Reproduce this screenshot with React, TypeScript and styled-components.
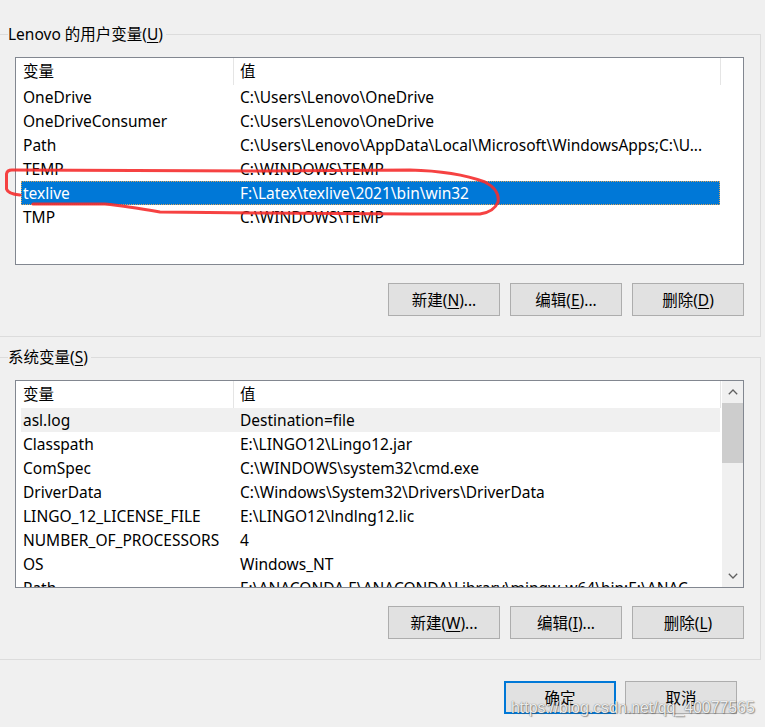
import styled, { createGlobalStyle } from "styled-components";

const GlobalStyle = createGlobalStyle`
  html, body {
    margin: 0;
    padding: 0;
    background: #f0f0f0;
  }
  body {
    font-family: "Noto Sans", "Noto Sans CJK SC", sans-serif;
    font-size: 15.5px;
    color: #000;
  }
`;

interface EnvVar {
  name: string;
  value: string;
  state?: "active" | "inactive";
}

const userVars: EnvVar[] = [
  { name: "OneDrive", value: "C:\\Users\\Lenovo\\OneDrive" },
  { name: "OneDriveConsumer", value: "C:\\Users\\Lenovo\\OneDrive" },
  {
    name: "Path",
    value: "C:\\Users\\Lenovo\\AppData\\Local\\Microsoft\\WindowsApps;C:\\U...",
  },
  { name: "TEMP", value: "C:\\WINDOWS\\TEMP" },
  { name: "texlive", value: "F:\\Latex\\texlive\\2021\\bin\\win32", state: "active" },
  { name: "TMP", value: "C:\\WINDOWS\\TEMP" },
];

const systemVars: EnvVar[] = [
  { name: "asl.log", value: "Destination=file", state: "inactive" },
  { name: "Classpath", value: "E:\\LINGO12\\Lingo12.jar" },
  { name: "ComSpec", value: "C:\\WINDOWS\\system32\\cmd.exe" },
  { name: "DriverData", value: "C:\\Windows\\System32\\Drivers\\DriverData" },
  { name: "LINGO_12_LICENSE_FILE", value: "E:\\LINGO12\\lndlng12.lic" },
  { name: "NUMBER_OF_PROCESSORS", value: "4" },
  { name: "OS", value: "Windows_NT" },
  {
    name: "Path",
    value: "E:\\ANACONDA.E\\ANACONDA\\Library\\mingw-w64\\bin;E:\\ANAC...",
  },
];

const Page = styled.div`
  position: relative;
  width: 765px;
  height: 727px;
  overflow: hidden;
  padding-top: 24px;
  box-sizing: border-box;
`;

const Group = styled.fieldset<{ $gap?: number }>`
  box-sizing: border-box;
  width: 761px;
  min-width: 0;
  margin: ${(p) => p.$gap ?? 0}px 0 0 0;
  padding: 13px 16px 20px 8px;
  border: 1px solid #dcdcdc;
  border-left: none;
`;

const Legend = styled.legend`
  padding: 0 3px 0 0;
  line-height: 20px;
`;

const Key = styled.span`
  text-decoration: underline;
  text-underline-offset: 2px;
  text-decoration-thickness: 1px;
`;

const ListBox = styled.div`
  box-sizing: border-box;
  margin-left: 7px;
  height: 208px;
  border: 1px solid #828790;
  background: #fff;
  display: flex;
  overflow: hidden;
`;

const ListBody = styled.div`
  flex: 1;
  min-width: 0;
  overflow: hidden;
`;

const Header = styled.div`
  display: grid;
  grid-template-columns: 218px 487px;
  height: 27px;
`;

const HeaderCell = styled.div`
  box-sizing: border-box;
  padding-left: 7px;
  line-height: 27px;
  border-right: 1px solid #e5e5e5;
  &:last-child {
    padding-left: 6px;
  }
`;

const Row = styled.div<{ $state?: "active" | "inactive" }>`
  display: grid;
  grid-template-columns: 217px 482px;
  margin-left: 5px;
  width: 699px;
  height: 24px;
  line-height: 24px;
  box-sizing: border-box;
  background: ${(p) =>
    p.$state === "active" ? "#0078d7" : p.$state === "inactive" ? "#f0f0f0" : "transparent"};
  color: ${(p) => (p.$state === "active" ? "#fff" : "#000")};
  outline: ${(p) => (p.$state === "active" ? "1px dotted #d9a35a" : "none")};
  outline-offset: -1px;
`;

const Cell = styled.div`
  padding-left: 2px;
  white-space: nowrap;
  overflow: hidden;
`;

const ScrollBar = styled.div`
  width: 21px;
  flex: none;
  background: #f0f0f0;
  display: flex;
  flex-direction: column;
`;

const ArrowButton = styled.div`
  height: 22px;
  display: flex;
  align-items: center;
  justify-content: center;
`;

const Thumb = styled.div`
  height: 60px;
  background: #cdcdcd;
`;

const Track = styled.div`
  flex: 1;
`;

const ButtonRow = styled.div<{ $top: number; $right?: number; $gap: number }>`
  display: flex;
  justify-content: flex-end;
  gap: ${(p) => p.$gap}px;
  margin-top: ${(p) => p.$top}px;
  padding-right: ${(p) => p.$right ?? 0}px;
`;

const Button = styled.button<{ $primary?: boolean }>`
  box-sizing: border-box;
  width: 112px;
  height: 33px;
  margin: 0;
  padding: 0;
  background: #e1e1e1;
  border: ${(p) => (p.$primary ? "2px solid #0078d7" : "1px solid #adadad")};
  font-family: inherit;
  font-size: 15.5px;
  color: #000;
  line-height: 20px;
`;

const Annotation = styled.svg`
  position: absolute;
  left: 0;
  top: 0;
  pointer-events: none;
`;

const Watermark = styled.div`
  position: absolute;
  left: 511px;
  top: 699px;
  font-family: "Liberation Sans", Arial, sans-serif;
  font-size: 15.9px;
  line-height: 17px;
  color: rgba(255, 255, 255, 0.9);
  text-shadow: 0 0 1px rgba(60, 60, 60, 0.8), 1px 1px 1px rgba(80, 80, 80, 0.5);
  white-space: nowrap;
  pointer-events: none;
`;

const Chevron = ({ down }: { down?: boolean }) => (
  <svg width="10" height="6" viewBox="0 0 10 6">
    <polyline
      points={down ? "0.8,0.8 5,5 9.2,0.8" : "0.8,5.2 5,1 9.2,5.2"}
      fill="none"
      stroke="#606060"
      strokeWidth="1.3"
    />
  </svg>
);

const VarList = ({ vars, scroll }: { vars: EnvVar[]; scroll?: boolean }) => (
  <ListBox>
    <ListBody>
      <Header>
        <HeaderCell>变量</HeaderCell>
        <HeaderCell>值</HeaderCell>
      </Header>
      {vars.map((v, i) => (
        <Row key={i} $state={v.state}>
          <Cell>{v.name}</Cell>
          <Cell>{v.value}</Cell>
        </Row>
      ))}
    </ListBody>
    {scroll && (
      <ScrollBar>
        <ArrowButton>
          <Chevron />
        </ArrowButton>
        <Thumb />
        <Track />
        <ArrowButton>
          <Chevron down />
        </ArrowButton>
      </ScrollBar>
    )}
  </ListBox>
);

export default function App() {
  return (
    <Page>
      <GlobalStyle />
      <Group>
        <Legend>
          Lenovo 的用户变量(<Key>U</Key>)
        </Legend>
        <VarList vars={userVars} />
        <ButtonRow $top={18} $gap={10}>
          <Button>
            新建(<Key>N</Key>)...
          </Button>
          <Button>
            编辑(<Key>E</Key>)...
          </Button>
          <Button>
            删除(<Key>D</Key>)
          </Button>
        </ButtonRow>
      </Group>

      <Group $gap={10}>
        <Legend>
          系统变量(<Key>S</Key>)
        </Legend>
        <VarList vars={systemVars} scroll />
        <ButtonRow $top={18} $gap={10}>
          <Button>
            新建(<Key>W</Key>)...
          </Button>
          <Button>
            编辑(<Key>I</Key>)...
          </Button>
          <Button>
            删除(<Key>L</Key>)
          </Button>
        </ButtonRow>
      </Group>

      <ButtonRow $top={21} $right={28} $gap={9}>
        <Button $primary>确定</Button>
        <Button>取消</Button>
      </ButtonRow>

      <Annotation width="765" height="727" viewBox="0 0 765 727">
        <path
          d="M20,195 Q8,194 6.5,189 L6.5,174 Q7,170 12,170 L260,171 L410,170 Q455,171 485,182 Q500,190 498,202 Q494,212 480,214 L410,214 L260,213 L160,212 Q125,206 105,204 L33,204"
          fill="none"
          stroke="#f52e2e"
          strokeWidth="3"
          strokeLinecap="round"
          strokeLinejoin="round"
          opacity="0.9"
        />
      </Annotation>

      <Watermark>https://blog.csdn.net/qq_40077565</Watermark>
    </Page>
  );
}
